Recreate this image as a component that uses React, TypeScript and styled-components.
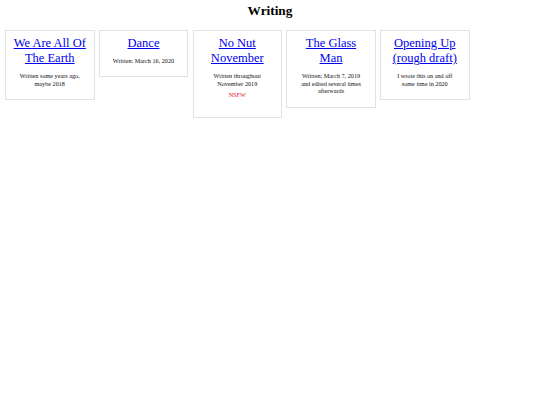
import styled, { createGlobalStyle } from "styled-components";

type Piece = {
  title: string;
  href: string;
  note: string;
  nsfw?: boolean;
};

const pieces: Piece[] = [
  {
    title: "We Are All Of The Earth",
    href: "#we-are-all-of-the-earth",
    note: "Written some years ago, maybe 2018",
  },
  {
    title: "Dance",
    href: "#dance",
    note: "Written: March 16, 2020",
  },
  {
    title: "No Nut November",
    href: "#no-nut-november",
    note: "Written throughout November 2019",
    nsfw: true,
  },
  {
    title: "The Glass Man",
    href: "#the-glass-man",
    note: "Written: March 7, 2019 and edited several times afterwards",
  },
  {
    title: "Opening Up (rough draft)",
    href: "#opening-up",
    note: "I wrote this on and off some time in 2020",
  },
];

const App = () => {
  return (
    <>
      <GlobalStyle />
      <Page>
        <Heading>Writing</Heading>
        <CardRow>
          {pieces.map((piece) => (
            <Card key={piece.href}>
              <CardTitle>
                <TitleLink href={piece.href}>{piece.title}</TitleLink>
              </CardTitle>
              <Note>{piece.note}</Note>
              {piece.nsfw ? <Warning>NSFW</Warning> : null}
            </Card>
          ))}
        </CardRow>
      </Page>
    </>
  );
};

const GlobalStyle = createGlobalStyle`
  html, body {
    margin: 0;
    padding: 0;
    background: #ffffff;
  }
  body {
    font-family: "Liberation Serif", "Times New Roman", serif;
    color: #000000;
  }
`;

const Page = styled.div`
  width: 540px;
  min-height: 405px;
  display: flex;
  flex-direction: column;
`;

const Heading = styled.h1`
  margin: 0;
  padding-top: 2.8px;
  font-size: 13.3px;
  line-height: 15px;
  font-weight: 700;
  text-align: center;
`;

const CardRow = styled.div`
  display: flex;
  align-items: flex-start;
  gap: 4.25px;
  padding: 12.5px 0 0 5px;
`;

const Card = styled.div`
  box-sizing: border-box;
  width: 89.5px;
  flex: 0 0 89.5px;
  border: 1px solid #e2e2e2;
  padding: 5px 6.2px 11.5px;
  text-align: center;
`;

const CardTitle = styled.h2`
  margin: 0;
  font-size: 12.5px;
  line-height: 15px;
  font-weight: 400;
`;

const TitleLink = styled.a`
  color: #0000ee;
  text-decoration: underline;
`;

const Note = styled.p`
  margin: 5.5px 4.5px 0;
  font-size: 6.2px;
  line-height: 7.8px;
  color: #111111;
`;

const Warning = styled.p`
  margin: 3.4px 0 6.6px;
  font-size: 6.2px;
  line-height: 7.8px;
  color: #e0201e;
`;

export default App;
